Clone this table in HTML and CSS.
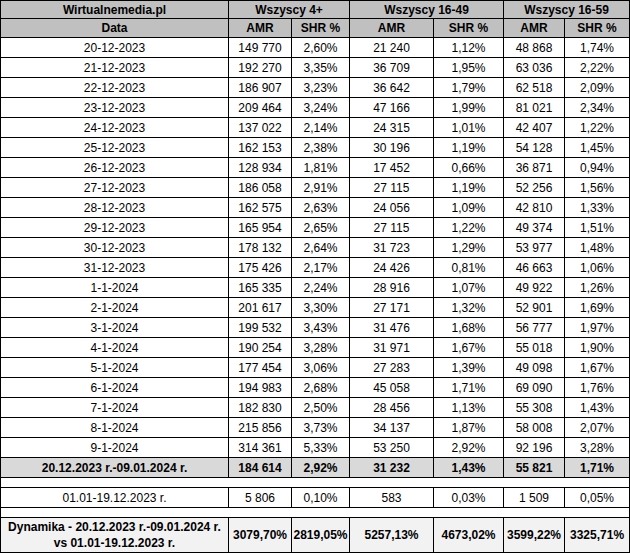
FILE: index.html
```html
<!DOCTYPE html>
<html lang="pl">
<head>
<meta charset="utf-8">
<title>Wirtualnemedia.pl</title>
<link rel="stylesheet" href="styles.css">
</head>
<body>
<table class="grid">
  <colgroup>
    <col class="c-date">
    <col class="c-a1"><col class="c-s1">
    <col class="c-a2"><col class="c-s2">
    <col class="c-a3"><col class="c-s3">
  </colgroup>
  <thead>
    <tr class="h1">
      <th>Wirtualnemedia.pl</th>
      <th colspan="2">Wszyscy 4+</th>
      <th colspan="2">Wszyscy 16-49</th>
      <th colspan="2">Wszyscy 16-59</th>
    </tr>
    <tr class="h2">
      <th>Data</th>
      <th>AMR</th><th>SHR %</th>
      <th>AMR</th><th>SHR %</th>
      <th>AMR</th><th>SHR %</th>
    </tr>
  </thead>
  <tbody>
    <tr class="row"><td>20-12-2023</td><td>149 770</td><td>2,60%</td><td>21 240</td><td>1,12%</td><td>48 868</td><td>1,74%</td></tr>
    <tr class="row"><td>21-12-2023</td><td>192 270</td><td>3,35%</td><td>36 709</td><td>1,95%</td><td>63 036</td><td>2,22%</td></tr>
    <tr class="row"><td>22-12-2023</td><td>186 907</td><td>3,23%</td><td>36 642</td><td>1,79%</td><td>62 518</td><td>2,09%</td></tr>
    <tr class="row"><td>23-12-2023</td><td>209 464</td><td>3,24%</td><td>47 166</td><td>1,99%</td><td>81 021</td><td>2,34%</td></tr>
    <tr class="row"><td>24-12-2023</td><td>137 022</td><td>2,14%</td><td>24 315</td><td>1,01%</td><td>42 407</td><td>1,22%</td></tr>
    <tr class="row"><td>25-12-2023</td><td>162 153</td><td>2,38%</td><td>30 196</td><td>1,19%</td><td>54 128</td><td>1,45%</td></tr>
    <tr class="row"><td>26-12-2023</td><td>128 934</td><td>1,81%</td><td>17 452</td><td>0,66%</td><td>36 871</td><td>0,94%</td></tr>
    <tr class="row"><td>27-12-2023</td><td>186 058</td><td>2,91%</td><td>27 115</td><td>1,19%</td><td>52 256</td><td>1,56%</td></tr>
    <tr class="row"><td>28-12-2023</td><td>162 575</td><td>2,63%</td><td>24 056</td><td>1,09%</td><td>42 810</td><td>1,33%</td></tr>
    <tr class="row"><td>29-12-2023</td><td>165 954</td><td>2,65%</td><td>27 115</td><td>1,22%</td><td>49 374</td><td>1,51%</td></tr>
    <tr class="row"><td>30-12-2023</td><td>178 132</td><td>2,64%</td><td>31 723</td><td>1,29%</td><td>53 977</td><td>1,48%</td></tr>
    <tr class="row"><td>31-12-2023</td><td>175 426</td><td>2,17%</td><td>24 426</td><td>0,81%</td><td>46 663</td><td>1,06%</td></tr>
    <tr class="row"><td>1-1-2024</td><td>165 335</td><td>2,24%</td><td>28 916</td><td>1,07%</td><td>49 922</td><td>1,26%</td></tr>
    <tr class="row"><td>2-1-2024</td><td>201 617</td><td>3,30%</td><td>27 171</td><td>1,32%</td><td>52 901</td><td>1,69%</td></tr>
    <tr class="row"><td>3-1-2024</td><td>199 532</td><td>3,43%</td><td>31 476</td><td>1,68%</td><td>56 777</td><td>1,97%</td></tr>
    <tr class="row"><td>4-1-2024</td><td>190 254</td><td>3,28%</td><td>31 971</td><td>1,67%</td><td>55 018</td><td>1,90%</td></tr>
    <tr class="row"><td>5-1-2024</td><td>177 454</td><td>3,06%</td><td>27 283</td><td>1,39%</td><td>49 098</td><td>1,67%</td></tr>
    <tr class="row"><td>6-1-2024</td><td>194 983</td><td>2,68%</td><td>45 058</td><td>1,71%</td><td>69 090</td><td>1,76%</td></tr>
    <tr class="row"><td>7-1-2024</td><td>182 830</td><td>2,50%</td><td>28 456</td><td>1,13%</td><td>55 308</td><td>1,43%</td></tr>
    <tr class="row"><td>8-1-2024</td><td>215 856</td><td>3,73%</td><td>34 137</td><td>1,87%</td><td>58 008</td><td>2,07%</td></tr>
    <tr class="row"><td>9-1-2024</td><td>314 361</td><td>5,33%</td><td>53 250</td><td>2,92%</td><td>92 196</td><td>3,28%</td></tr>
    <tr class="row total"><td>20.12.2023 r.-09.01.2024 r.</td><td>184 614</td><td>2,92%</td><td>31 232</td><td>1,43%</td><td>55 821</td><td>1,71%</td></tr>
    <tr class="spacer"><td colspan="7"></td></tr>
    <tr class="row"><td>01.01-19.12.2023 r.</td><td>5 806</td><td>0,10%</td><td>583</td><td>0,03%</td><td>1 509</td><td>0,05%</td></tr>
    <tr class="spacer"><td colspan="7"></td></tr>
    <tr class="dyn"><td>Dynamika - 20.12.2023 r.-09.01.2024 r.<br>vs 01.01-19.12.2023 r.</td><td>3079,70%</td><td>2819,05%</td><td>5257,13%</td><td>4673,02%</td><td>3599,22%</td><td>3325,71%</td></tr>
  </tbody>
</table>
</body>
</html>
```

FILE: styles.css
```css
html, body {
  margin: 0;
  padding: 0;
  background: #ffffff;
}

.grid {
  border-collapse: collapse;
  table-layout: fixed;
  width: 630px;
  font-family: "Liberation Sans", Arial, sans-serif;
  font-size: 12px;
  color: #000;
}

.c-date { width: 228px; }
.c-a1 { width: 63px; }
.c-s1 { width: 58px; }
.c-a2 { width: 84px; }
.c-s2 { width: 70px; }
.c-a3 { width: 61px; }
.c-s3 { width: 65px; }

.grid th,
.grid td {
  border: 1px solid #000;
  padding: 0;
  text-align: center;
  vertical-align: middle;
  line-height: 14px;
  white-space: nowrap;
  overflow: hidden;
}

.grid th {
  background: #c0c0c0;
  font-weight: bold;
}

.h1 { height: 18px; }
.h2 { height: 19px; }
.row { height: 20px; }
.spacer { height: 10px; }
.spacer td { line-height: 0; font-size: 0; }

.total td {
  background: #d9d9d9;
  font-weight: bold;
}

.dyn { height: 35px; }
.dyn td {
  background: #f2f2f2;
  font-weight: bold;
  line-height: 16px;
}
.dyn td:first-child { background: #f2f2f2; }
```
